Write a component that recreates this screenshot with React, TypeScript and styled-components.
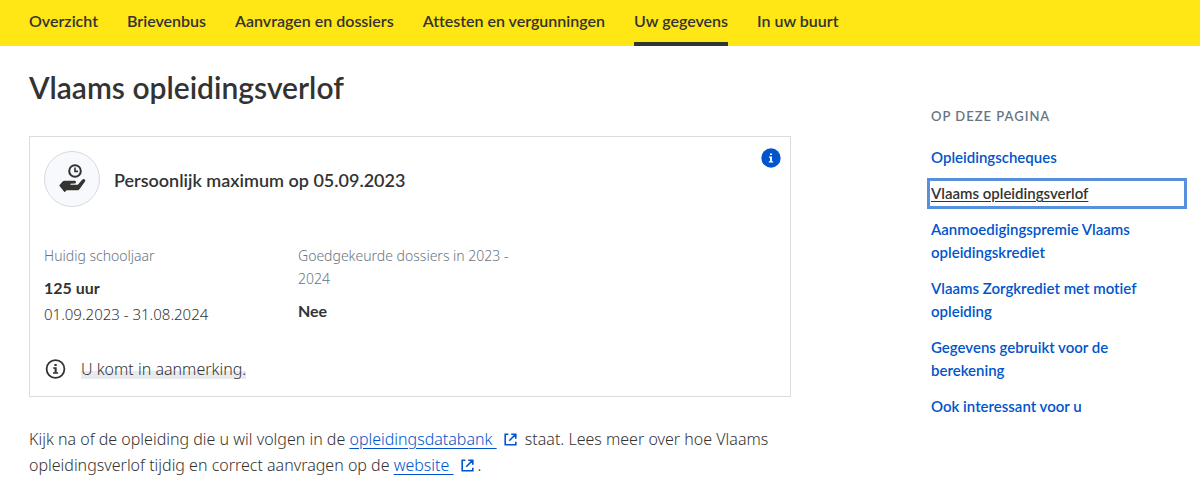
import React from "react";
import styled, { createGlobalStyle } from "styled-components";

const ink = "#333332";
const blue = "#0055cc";
const grey = "#687483";
const strongFont = `Lato, "Noto Sans", sans-serif`;

const GlobalStyle = createGlobalStyle`
  *, *::before, *::after { box-sizing: border-box; }
  body {
    margin: 0;
    background: #fff;
    color: ${ink};
    font-family: "Noto Sans", "Open Sans", sans-serif;
    font-size: 16px;
    font-weight: 300;
    line-height: 26px;
    font-variant-ligatures: none;
  }
  h1, h2, h3, p, ul, dl, dd { margin: 0; padding: 0; }
  ul { list-style: none; }
`;

const NavBar = styled.nav`
  background: #ffe615;
  padding: 0 29px;
`;

const NavList = styled.ul`
  display: flex;
  gap: 29px;
`;

const NavLink = styled.a<{ $active?: boolean }>`
  display: block;
  padding: 8px 0;
  border-bottom: 4px solid ${(p) => (p.$active ? ink : "transparent")};
  color: ${ink};
  font-family: ${strongFont};
  font-size: 16px;
  font-weight: 600;
  text-decoration: none;
  white-space: nowrap;
`;

const Page = styled.div`
  display: grid;
  grid-template-columns: 762fr 260fr;
  column-gap: 136px;
  align-items: start;
  padding: 0 13px 20px 29px;
`;

const Main = styled.main`
  padding-top: 23px;
`;

const Title = styled.h1`
  margin-bottom: 31px;
  font-family: ${strongFont};
  font-size: 30px;
  font-weight: 600;
  line-height: 36px;
`;

const Card = styled.section`
  margin-bottom: 29px;
  padding: 14px;
  border: 1px solid #d9dde2;
`;

const CardHeader = styled.header`
  display: flex;
  align-items: center;
  gap: 14px;
  margin-bottom: 37px;
`;

const Badge = styled.span`
  display: flex;
  align-items: center;
  justify-content: center;
  flex: none;
  width: 56px;
  height: 56px;
  border: 1px solid #d5dae1;
  border-radius: 50%;
  background: #f7f9fc;
`;

const CardTitle = styled.h2`
  flex: 1;
  padding-top: 2px;
  font-family: ${strongFont};
  font-size: 18px;
  font-weight: 600;
`;

const InfoButton = styled.button`
  display: flex;
  align-self: flex-start;
  margin: -3px -5px 0 0;
  padding: 0;
  border: 0;
  background: none;
  cursor: pointer;
`;

const Facts = styled.dl`
  display: grid;
  grid-template-columns: repeat(3, 1fr);
  column-gap: 30px;
  margin-bottom: 29px;
`;

const Label = styled.dt`
  margin-bottom: 8px;
  color: ${grey};
  font-size: 14px;
  line-height: 23px;
`;

const Value = styled.dd<{ $strong?: boolean }>`
  font-family: ${(p) => (p.$strong ? strongFont : "inherit")};
  font-size: ${(p) => (p.$strong ? 16 : 15)}px;
  font-weight: ${(p) => (p.$strong ? 700 : 300)};
`;

const Notice = styled.p`
  display: flex;
  align-items: center;
  gap: 15px;
  padding-left: 1px;
`;

const Marked = styled.span`
  background: linear-gradient(to top, transparent 3px, #e8ebee 3px, #e8ebee 11px, transparent 11px);
`;

const TextLink = styled.a`
  color: ${blue};
  text-decoration: underline;
  text-underline-offset: 3px;
  white-space: pre;
`;

const ExternalSvg = styled.svg`
  margin: 0 4px 0 7px;
  vertical-align: -1px;
`;

const Aside = styled.aside`
  padding-top: 59px;
  font-family: ${strongFont};
  font-weight: 600;
`;

const AsideTitle = styled.h3`
  margin-bottom: 14px;
  padding-left: 4px;
  color: ${grey};
  font-size: 13px;
  font-weight: 600;
  line-height: 23px;
  letter-spacing: 1px;
  text-transform: uppercase;
`;

const AsideList = styled.ul`
  display: grid;
  gap: 5px;
`;

const AsideLink = styled.a<{ $current?: boolean }>`
  display: block;
  padding: 1px;
  padding-right: 40px;
  border: 3px solid ${(p) => (p.$current ? "#5990de" : "transparent")};
  color: ${(p) => (p.$current ? ink : blue)};
  font-size: 15px;
  line-height: 23px;
  text-decoration: ${(p) => (p.$current ? "underline" : "none")};
  text-underline-offset: 2px;
`;

const HandClock = () => (
  <svg width="28" height="30" viewBox="0 0 28 30" aria-hidden="true">
    <circle cx="17" cy="7" r="5.8" fill="none" stroke={ink} strokeWidth="2" />
    <path d="M17 3.5V7.4H20" fill="none" stroke={ink} strokeWidth="1.6" />
    <path
      d="M1.2 21.6 4.6 17.6Q5.4 16.8 6.6 16.8H16.6Q18 16.8 18 18.2 18 19.4 16.6 19.5L12.4 19.8V20.8H18.6Q19.8 20.8 20.5 19.9L24.4 15.6Q25.6 14.6 26.8 15.4 27.8 16.2 27 17.4L21.6 25Q20.8 26.2 19.4 26.2H8.6L6.6 28.2Z"
      fill={ink}
    />
  </svg>
);

const InfoFilled = () => (
  <svg width="20" height="20" viewBox="0 0 20 20" aria-hidden="true">
    <circle cx="10" cy="10" r="9.7" fill={blue} />
    <path d="M9 5.4h2v1.7H9zM8 8.5h3v4.7h1.2v1.2H7.8v-1.2H9V9.7H8z" fill="#fff" />
  </svg>
);

const InfoOutline = () => (
  <svg width="21" height="20" viewBox="0 0 21 20" aria-hidden="true">
    <circle cx="10.5" cy="10" r="8.9" fill="none" stroke={ink} strokeWidth="1.8" />
    <path d="M9.4 4.9h2.3v2H9.4zM8.2 8.2h3.5v5.1h1.5v1.5H8V13.3h1.6V9.7H8.2z" fill={ink} />
  </svg>
);

const External = () => (
  <ExternalSvg width="13" height="13" viewBox="0 0 13 13" aria-hidden="true">
    <path
      d="M4.4 1.2H1.2V11.8H11.8V8.8M7.2 1.2H11.8V5.8M11.6 1.4 5.2 7.8"
      fill="none"
      stroke={blue}
      strokeWidth="1.6"
    />
  </ExternalSvg>
);

const navItems = [
  "Overzicht",
  "Brievenbus",
  "Aanvragen en dossiers",
  "Attesten en vergunningen",
  "Uw gegevens",
  "In uw buurt",
];

const sections = [
  "Opleidingscheques",
  "Vlaams opleidingsverlof",
  "Aanmoedigingspremie Vlaams opleidingskrediet",
  "Vlaams Zorgkrediet met motief opleiding",
  "Gegevens gebruikt voor de berekening",
  "Ook interessant voor u",
];

export default function App() {
  return (
    <>
      <GlobalStyle />
      <NavBar>
        <NavList>
          {navItems.map((item) => (
            <li key={item}>
              <NavLink href="#" $active={item === "Uw gegevens"}>
                {item}
              </NavLink>
            </li>
          ))}
        </NavList>
      </NavBar>
      <Page>
        <Main>
          <Title>Vlaams opleidingsverlof</Title>
          <Card>
            <CardHeader>
              <Badge>
                <HandClock />
              </Badge>
              <CardTitle>Persoonlijk maximum op 05.09.2023</CardTitle>
              <InfoButton type="button" aria-label="Meer informatie">
                <InfoFilled />
              </InfoButton>
            </CardHeader>
            <Facts>
              <div>
                <Label>Huidig schooljaar</Label>
                <Value $strong>125 uur</Value>
                <Value>01.09.2023 - 31.08.2024</Value>
              </div>
              <div>
                <Label>Goedgekeurde dossiers in 2023 - 2024</Label>
                <Value $strong>Nee</Value>
              </div>
            </Facts>
            <Notice>
              <InfoOutline />
              <Marked>U komt in aanmerking.</Marked>
            </Notice>
          </Card>
          <p>
            Kijk na of de opleiding die u wil volgen in de{" "}
            <TextLink href="#">{"opleidingsdatabank "}</TextLink>
            <External /> staat. Lees meer over hoe Vlaams opleidingsverlof tijdig en
            correct aanvragen op de <TextLink href="#">{"website "}</TextLink>
            <External />.
          </p>
        </Main>
        <Aside>
          <AsideTitle>Op deze pagina</AsideTitle>
          <AsideList>
            {sections.map((s) => (
              <li key={s}>
                <AsideLink href="#" $current={s === "Vlaams opleidingsverlof"}>
                  {s}
                </AsideLink>
              </li>
            ))}
          </AsideList>
        </Aside>
      </Page>
    </>
  );
}
